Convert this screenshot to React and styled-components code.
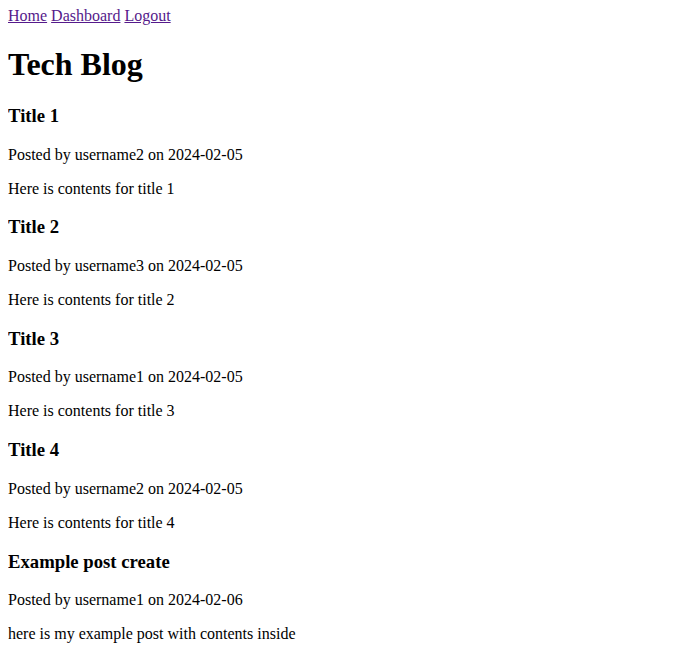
import React from 'react';
import styled, { createGlobalStyle } from 'styled-components';

const GlobalStyle = createGlobalStyle`
  body {
    margin: 7px 8px 8px;
    font-family: "Liberation Serif", "Times New Roman", serif;
    font-size: 16px;
    color: #000;
    background: #fff;
  }
`;

const Nav = styled.nav`
  line-height: normal;
`;

const NavLink = styled.a`
  color: #551a8b;
  text-decoration: underline;
`;

const Heading = styled.h1`
  font-size: 2em;
  font-weight: bold;
  margin: 0.67em 0;
`;

const PostTitle = styled.h3`
  font-size: 1.17em;
  font-weight: bold;
  margin: 1em 0;
`;

const Text = styled.p`
  margin: 1em 0;
`;

const posts = [
  { title: 'Title 1', user: 'username2', date: '2024-02-05', body: 'Here is contents for title 1' },
  { title: 'Title 2', user: 'username3', date: '2024-02-05', body: 'Here is contents for title 2' },
  { title: 'Title 3', user: 'username1', date: '2024-02-05', body: 'Here is contents for title 3' },
  { title: 'Title 4', user: 'username2', date: '2024-02-05', body: 'Here is contents for title 4' },
  { title: 'Example post create', user: 'username1', date: '2024-02-06', body: 'here is my example post with contents inside' },
];

const App = () => {
  return (
    <>
      <GlobalStyle />
      <Nav>
        <NavLink href="#">Home</NavLink> <NavLink href="#">Dashboard</NavLink> <NavLink href="#">Logout</NavLink>
      </Nav>
      <Heading>Tech Blog</Heading>
      {posts.map((post, i) => (
        <div key={i}>
          <PostTitle>{post.title}</PostTitle>
          <Text>Posted by {post.user} on {post.date}</Text>
          <Text>{post.body}</Text>
        </div>
      ))}
    </>
  );
};

export default App;
